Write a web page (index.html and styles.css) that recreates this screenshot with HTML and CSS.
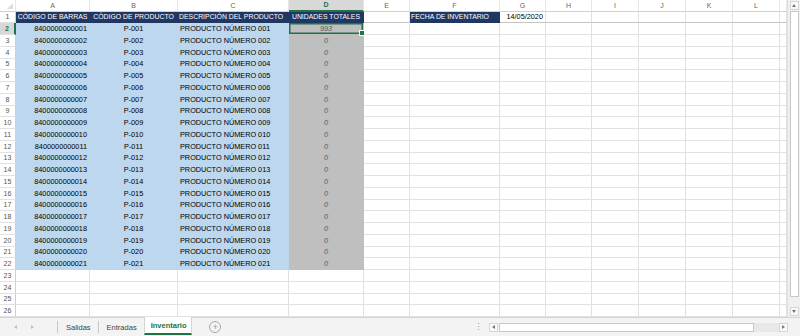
FILE: index.html
```html
<!DOCTYPE html>
<html lang="es">
<head>
    <meta charset="UTF-8">
    <title>Inventario</title>
    <link rel="stylesheet" href="styles.css">
</head>
<body>
    <div class="app">
        <div class="sheet-area">
            <!-- Rejilla de celdas, se rellena desde script.js -->
            <div class="grid" id="grid"></div>

            <div class="vscroll">
                <div class="sb-btn"><span class="tri up"></span></div>
                <div class="vthumb"></div>
                <div class="sb-btn"><span class="tri down"></span></div>
            </div>
        </div>

        <div class="tabbar">
            <div class="tab-nav">
                <span class="tri left light"></span>
                <span class="tri right light"></span>
            </div>
            <div class="tab">Salidas</div>
            <div class="tab">Entradas</div>
            <div class="tab active">Inventario</div>
            <div class="add-sheet">+</div>
            <div class="spacer"></div>
            <div class="dots">⋮</div>
            <div class="hscroll">
                <div class="sb-btn"><span class="tri left"></span></div>
                <div class="hthumb"></div>
                <div class="htrack"></div>
                <div class="sb-btn"><span class="tri right"></span></div>
            </div>
            <div class="corner"></div>
        </div>
    </div>

    <script src="script.js"></script>
</body>
</html>
```

FILE: styles.css
```css
body {
    margin: 0;
    padding: 0;
    font-family: 'Liberation Sans', Arial, sans-serif;
    background-color: #ffffff;
    color: #000;
}
.app {
    width: 800px;
    height: 336px;
    display: flex;
    flex-direction: column;
    overflow: hidden;
}
.sheet-area {
    display: flex;
    height: 317px;
}
.grid {
    width: 787px;
    display: grid;
    grid-template-columns: 16px 74px 88px 111px 75px 46px 90px 46px 46px 47px 47px 47px 47px 7px;
    grid-template-rows: 11.5px repeat(26, 11.75px);
    overflow: hidden;
}
.cell {
    box-sizing: border-box;
    border-right: 1px solid #e1e1e1;
    border-bottom: 1px solid #e1e1e1;
    font-size: 7.3px;
    padding: 0 2px;
    white-space: nowrap;
    overflow: hidden;
    display: flex;
    align-items: center;
    position: relative;
}
.center { justify-content: center; }
.right { justify-content: flex-end; }

/* cabeceras de filas y columnas */
.colhead {
    justify-content: center;
    color: #666;
    font-size: 7px;
    border-bottom-color: #d0d0d0;
    border-right-color: #e6e6e6;
}
.rowhead {
    justify-content: center;
    color: #555;
    font-size: 7px;
    border-right-color: #d0d0d0;
    padding: 0;
}
.colhead.sel {
    background-color: #d8d8d8;
    color: #217346;
    font-weight: bold;
    border-bottom: 2px solid #217346;
}
.rowhead.sel {
    background-color: #d8d8d8;
    color: #217346;
    font-weight: bold;
    border-right: 2px solid #217346;
}
.corner-cell::after {
    content: "";
    position: absolute;
    right: 2px;
    bottom: 2px;
    border-left: 6px solid transparent;
    border-bottom: 6px solid #dcdcdc;
}
.freeze {
    border-bottom-color: #c4c4c4;
}

/* rellenos */
.navy {
    background-color: #203764;
    border-color: #203764;
    color: #ffffff;
    font-size: 6.9px;
    padding: 0 1px;
}
.blue {
    background-color: #bdd7ee;
    border-color: #bdd7ee;
}
.gray {
    background-color: #bfbfbf;
    border-color: #bfbfbf;
    color: #5a5a5a;
    font-style: italic;
    justify-content: center;
}
.active-cell {
    box-shadow: inset 0 0 0 1.5px #217346;
    overflow: visible;
}
.active-cell::after {
    content: "";
    position: absolute;
    right: -2px;
    bottom: -2px;
    width: 4px;
    height: 4px;
    background-color: #217346;
    border: 1px solid #fff;
    z-index: 2;
}

/* barras de desplazamiento */
.vscroll {
    width: 13px;
    background-color: #f0f0f0;
    border-left: 1px solid #e0e0e0;
    display: flex;
    flex-direction: column;
    align-items: center;
    box-sizing: border-box;
    padding: 1px 0;
}
.sb-btn {
    width: 9px;
    height: 9px;
    display: flex;
    align-items: center;
    justify-content: center;
    border: 1px solid #d6d6d6;
    background-color: #fafafa;
    box-sizing: border-box;
}
.vthumb {
    width: 9px;
    height: 286px;
    margin: 1px 0 10px;
    background-color: #fff;
    border: 1px solid #c8c8c8;
    box-sizing: border-box;
}
.tri {
    width: 0;
    height: 0;
    display: inline-block;
}
.tri.up {
    border-left: 2px solid transparent;
    border-right: 2px solid transparent;
    border-bottom: 3px solid #777;
}
.tri.down {
    border-left: 2px solid transparent;
    border-right: 2px solid transparent;
    border-top: 3px solid #777;
}
.tri.left {
    border-top: 2px solid transparent;
    border-bottom: 2px solid transparent;
    border-right: 3px solid #777;
}
.tri.right {
    border-top: 2px solid transparent;
    border-bottom: 2px solid transparent;
    border-left: 3px solid #777;
}
.tri.light.left { border-right-color: #c0c0c0; }
.tri.light.right { border-left-color: #c0c0c0; }

/* pestañas de hojas */
.tabbar {
    height: 19px;
    display: flex;
    align-items: stretch;
    background-color: #f3f3f3;
    border-top: 1px solid #d4d4d4;
    box-sizing: border-box;
    font-size: 7.5px;
    color: #444;
}
.tab-nav {
    width: 58px;
    display: flex;
    align-items: center;
    gap: 14px;
    padding-left: 14px;
    box-sizing: border-box;
    border-right: 1px solid #c8c8c8;
    margin: 3px 0;
}
.tab {
    display: flex;
    align-items: center;
    padding: 0 7px 0 8px;
    margin: 3px 0;
    border-right: 1px solid #c8c8c8;
}
.tab.active {
    margin: -1px 0 1px -1px;
    padding: 0 5px 0 6px;
    background-color: #ffffff;
    color: #217346;
    font-weight: bold;
    border-left: 1px solid #d4d4d4;
    border-right: 1px solid #d4d4d4;
    border-bottom: 2px solid #217346;
}
.add-sheet {
    width: 10px;
    height: 10px;
    margin: 3px 0 0 17px;
    border: 1px solid #aaa;
    border-radius: 50%;
    color: #999;
    font-size: 9px;
    line-height: 10px;
    text-align: center;
}
.spacer {
    flex: 1;
}
.dots {
    display: flex;
    align-items: center;
    color: #999;
    font-size: 9px;
    padding-right: 6px;
}
.hscroll {
    width: 299px;
    display: flex;
    align-items: center;
}
.hthumb {
    width: 255px;
    height: 9px;
    background-color: #fff;
    border: 1px solid #c8c8c8;
    box-sizing: border-box;
    margin-left: 1px;
}
.htrack {
    flex: 1;
    height: 9px;
    background-color: #e8e8e8;
}
.corner {
    width: 12px;
}
```

FILE: script.js
```js
const cols = ['A', 'B', 'C', 'D', 'E', 'F', 'G', 'H', 'I', 'J', 'K', 'L', ''];
const grid = document.getElementById('grid');

function addCell(text, cls) {
    const div = document.createElement('div');
    div.className = 'cell ' + (cls || '');
    div.textContent = text;
    grid.appendChild(div);
    return div;
}

// Fila de cabecera con las letras
addCell('', 'colhead corner-cell');
cols.forEach(c => addCell(c, 'colhead' + (c === 'D' ? ' sel' : '')));

// Fila 1: títulos
addCell('1', 'rowhead');
addCell('CÓDIGO DE BARRAS', 'navy center');
addCell('CÓDIGO DE PRODUCTO', 'navy center');
addCell('DESCRIPCIÓN DEL PRODUCTO', 'navy');
addCell('UNIDADES TOTALES', 'navy center');
addCell('', 'freeze');
addCell('FECHA DE INVENTARIO', 'navy');
addCell('14/05/2020', 'freeze right');
for (let i = 0; i < 6; i++) addCell('', 'freeze');

// Filas 2 a 22: productos
for (let n = 1; n <= 21; n++) {
    const num = String(n).padStart(3, '0');
    const row = n + 1;
    addCell(String(row), 'rowhead' + (row === 2 ? ' sel' : ''));
    addCell('84000000000' + String(n).padStart(2, '0'), 'blue right');
    addCell('P-' + num, 'blue center');
    addCell('PRODUCTO NÚMERO ' + num, 'blue');
    addCell(n === 1 ? '993' : '0', 'gray' + (n === 1 ? ' active-cell' : ''));
    for (let i = 0; i < 9; i++) addCell('', '');
}

// Filas vacías
for (let row = 23; row <= 26; row++) {
    addCell(String(row), 'rowhead');
    for (let i = 0; i < 13; i++) addCell('', '');
}
```
